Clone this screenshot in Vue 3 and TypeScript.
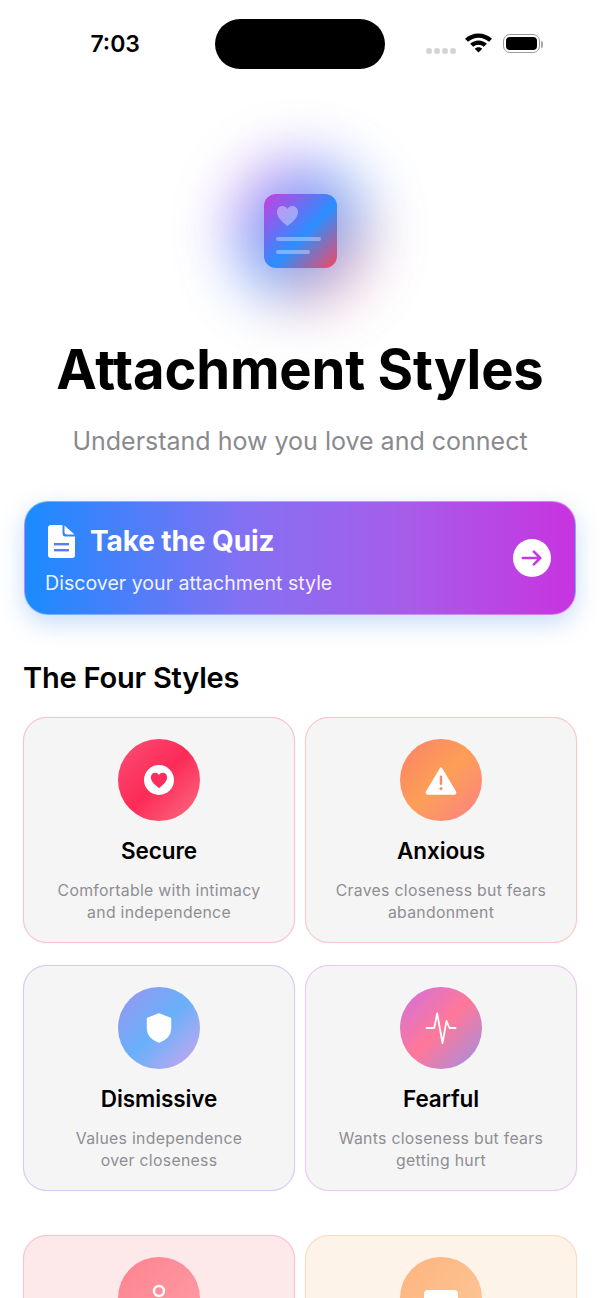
<template>
  <main class="screen">
    <header class="status-bar">
      <span class="clock">7:03</span>
      <div class="island"></div>
      <div class="status-icons">
        <div class="signal"><i v-for="n in 4" :key="n"></i></div>
        <svg class="wifi" width="27" height="20" viewBox="2.200 3 21.600 15.300">
          <path d="M13 3C8.800 3 5 4.600 2.200 7.200L4.600 9.700C6.800 7.700 9.800 6.400 13 6.400s6.200 1.300 8.400 3.300l2.400-2.500C21 4.600 17.200 3 13 3Z" fill="#000" />
          <path d="M13 8.600c-2.600 0-5 1-6.700 2.600l2.500 2.500c1.100-1 2.600-1.700 4.200-1.700s3.100.7 4.200 1.700l2.500-2.500C18 9.600 15.600 8.600 13 8.600Z" fill="#000" />
          <path d="M13 14c-1.200 0-2.300.5-3 1.200l3 3.100 3-3.100c-.7-.7-1.800-1.200-3-1.200Z" fill="#000" />
        </svg>
        <div class="battery"><span></span></div>
      </div>
    </header>

    <section class="hero">
      <div class="app-icon-wrap">
        <div class="glow"></div>
        <div class="app-icon">
          <svg width="23" height="22" viewBox="0 0 24 23">
            <path d="M12 22C4.500 16 1 12 1 7.200 1 3.700 3.600 1 6.800 1 8.900 1 10.900 2.100 12 4 13.100 2.100 15.100 1 17.200 1 20.400 1 23 3.700 23 7.200 23 12 19.500 16 12 22Z" fill="#fff" fill-opacity=".38" />
          </svg>
          <div class="icon-line long"></div>
          <div class="icon-line short"></div>
        </div>
      </div>
      <h1>Attachment Styles</h1>
      <p class="subtitle">Understand how you love and connect</p>
    </section>

    <button class="quiz-card" type="button">
      <div class="quiz-text">
        <div class="quiz-title">
          <svg width="27" height="33" viewBox="0 0 27 33">
            <path d="M3 0h11.500v8.500A3 3 0 0 0 17.500 11.500H27V30a3 3 0 0 1-3 3H3a3 3 0 0 1-3-3V3a3 3 0 0 1 3-3Z" fill="#fff" />
            <path d="M16.500 .5 26.500 9.500h-8a2 2 0 0 1-2-2Z" fill="#fff" />
            <rect x="6" y="18" width="15" height="2.400" fill="#5a7cf5" />
            <rect x="6" y="24" width="15" height="2.400" fill="#5a7cf5" />
          </svg>
          <span>Take the Quiz</span>
        </div>
        <div class="quiz-sub">Discover your attachment style</div>
      </div>
      <div class="quiz-arrow">
        <svg width="22" height="22" viewBox="0 0 24 24" fill="none" stroke="#c23be0" stroke-width="2.800" stroke-linecap="round" stroke-linejoin="round">
          <path d="M2 12h19M14 5l7 7-7 7" />
        </svg>
      </div>
    </button>

    <h2>The Four Styles</h2>

    <section class="style-grid">
      <article v-for="item in styles" :key="item.kind" class="style-card" :class="item.kind">
        <div class="style-icon">
          <template v-if="item.kind === 'secure'">
            <div class="heart-disc">
              <svg width="18" height="17" viewBox="0 0 24 23">
                <path d="M12 22C4.500 16 1 12 1 7.200 1 3.700 3.600 1 6.800 1 8.900 1 10.900 2.100 12 4 13.100 2.100 15.100 1 17.200 1 20.400 1 23 3.700 23 7.200 23 12 19.500 16 12 22Z" fill="#fb2f5d" />
              </svg>
            </div>
          </template>
          <svg v-else-if="item.kind === 'anxious'" width="32" height="29" viewBox="0 0 32 29">
            <path d="M16 2.500 30 26a1 1 0 0 1-.9 1.500H2.900A1 1 0 0 1 2 26Z" fill="#fff" stroke="#fff" stroke-width="2.400" stroke-linejoin="round" />
            <rect x="14.800" y="9.500" width="2.400" height="9.500" rx="1.200" fill="#fb8a60" />
            <circle cx="16" cy="22.500" r="1.500" fill="#fb8a60" />
          </svg>
          <svg v-else-if="item.kind === 'dismissive'" width="26" height="30" viewBox="0 0 26 30">
            <path d="M13 1 24.500 5.500V15c0 7-4.500 11.500-11.500 14C6 26.500 1.500 22 1.500 15V5.500Z" fill="#fff" stroke="#fff" stroke-linejoin="round" stroke-width="1.500" />
          </svg>
          <svg v-else-if="item.kind === 'fearful'" width="32" height="32" viewBox="0 0 32 32" fill="none" stroke="#fff" stroke-width="1.800" stroke-linecap="round" stroke-linejoin="round">
            <path d="M1.500 16H9.200L12.200 1.500 17.500 31 21.500 9 24.500 16H30.500" />
          </svg>
          <svg v-else-if="item.kind === 'person'" width="32" height="32" viewBox="0 0 32 32" fill="none" stroke="#fff" stroke-width="2.400">
            <circle cx="16" cy="8" r="5" />
          </svg>
          <div v-else class="calendar"></div>
        </div>
        <h3>{{ item.name }}</h3>
        <p>{{ item.line1 }}<br />{{ item.line2 }}</p>
      </article>
    </section>
  </main>
</template>

<script setup lang="ts">
type StyleCard = {
  kind: string
  name: string
  line1: string
  line2: string
}

const styles: StyleCard[] = [
  { kind: 'secure', name: 'Secure', line1: 'Comfortable with intimacy', line2: 'and independence' },
  { kind: 'anxious', name: 'Anxious', line1: 'Craves closeness but fears', line2: 'abandonment' },
  { kind: 'dismissive', name: 'Dismissive', line1: 'Values independence', line2: 'over closeness' },
  { kind: 'fearful', name: 'Fearful', line1: 'Wants closeness but fears', line2: 'getting hurt' },
  { kind: 'person', name: '', line1: '', line2: '' },
  { kind: 'calendar', name: '', line1: '', line2: '' },
]
</script>

<style scoped>
.screen {
  width: 600px;
  height: 1298px;
  overflow: hidden;
  background: #fff;
  color: #000;
  font-family: Inter, "Liberation Sans", sans-serif;
}
.status-bar {
  display: grid;
  grid-template-columns: 215px 170px 215px;
  align-items: center;
  height: 50px;
  padding-top: 19px;
}
.clock {
  justify-self: end;
  margin-right: 75px;
  font-size: 23px;
  font-weight: 600;
  line-height: 50px;
}
.island {
  height: 50px;
  background: #000;
  border-radius: 25px;
}
.status-icons {
  display: flex;
  align-items: center;
  padding-left: 41px;
}
.signal {
  display: flex;
  gap: 2px;
  margin-top: 13px;
}
.signal i {
  width: 6px;
  height: 6px;
  border-radius: 50%;
  background: #d4d4d4;
}
.wifi {
  margin-left: 9px;
  margin-top: -2px;
}
.battery {
  position: relative;
  box-sizing: content-box;
  width: 31px;
  height: 13px;
  margin-left: 11px;
  margin-top: -1px;
  padding: 2px;
  border: 1px solid #9a9a9a;
  border-radius: 7px;
}
.battery span {
  display: block;
  width: 100%;
  height: 100%;
  background: #000;
  border-radius: 4px;
}
.battery::after {
  content: "";
  position: absolute;
  right: -4px;
  top: 6px;
  width: 2px;
  height: 7px;
  background: #a8a8a8;
  border-radius: 0 2px 2px 0;
}
.hero {
  display: flex;
  flex-direction: column;
  align-items: center;
  padding-top: 125px;
}
.app-icon-wrap {
  position: relative;
  width: 73px;
  height: 74px;
}
.glow {
  position: absolute;
  left: -31px;
  top: -34px;
  width: 135px;
  height: 142px;
  border-radius: 50%;
  background: linear-gradient(135deg, #c93fe0 10%, #2c8dff 50%, #ff5a6c 90%);
  filter: blur(30px);
  opacity: .7;
}
.app-icon {
  position: relative;
  box-sizing: border-box;
  width: 73px;
  height: 74px;
  padding: 11px 12px;
  border-radius: 12px;
  background: linear-gradient(135deg, #c93fe0 0%, #2b8fff 55%, #f8475f 100%);
}
.app-icon svg {
  display: block;
}
.icon-line {
  height: 4px;
  margin-top: 9px;
  border-radius: 2px;
  background: rgba(255, 255, 255, .35);
}
.icon-line.long {
  width: 45px;
  margin-top: 10px;
}
.icon-line.short {
  width: 34px;
}
h1 {
  margin: 71px 0 0;
  font-size: 54.400px;
  font-weight: 700;
  line-height: 60px;
  letter-spacing: -.2px;
}
.subtitle {
  margin: 26px 0 0;
  font-size: 25px;
  line-height: 32px;
  color: #8a8a8e;
}
.quiz-card {
  display: flex;
  align-items: center;
  justify-content: space-between;
  box-sizing: border-box;
  width: 552px;
  height: 114px;
  margin: 44px 24px 0;
  padding: 0 24px 0 20px;
  border: 1px solid rgba(255, 255, 255, .35);
  border-radius: 24px;
  background: linear-gradient(90deg, #1a8bff 0%, #8470f3 40%, #a85ce8 70%, #c833e0 100%);
  box-shadow: 0 8px 24px rgba(70, 140, 230, .3);
  color: #fff;
  font-family: inherit;
  text-align: left;
}
.quiz-text {
  margin-top: 3px;
}
.quiz-title {
  display: flex;
  align-items: center;
  gap: 15px;
  padding-left: 3px;
  font-size: 28px;
  font-weight: 700;
  line-height: 36px;
  letter-spacing: -.1px;
}
.quiz-sub {
  margin-top: 11px;
  font-size: 19.600px;
  line-height: 26px;
  color: rgba(255, 255, 255, .92);
}
.quiz-arrow {
  display: flex;
  align-items: center;
  justify-content: center;
  width: 38px;
  height: 38px;
  border-radius: 50%;
  background: #fff;
}
h2 {
  margin: 45px 23px 0;
  font-size: 29px;
  font-weight: 600;
  line-height: 36px;
  letter-spacing: -.2px;
}
.style-grid {
  display: grid;
  grid-template-columns: 272px 272px;
  column-gap: 10px;
  row-gap: 22px;
  margin: 21px 23px 0;
}
.style-card {
  --edge: #f9c2ce;
  display: flex;
  flex-direction: column;
  align-items: center;
  box-sizing: border-box;
  height: 226px;
  padding-top: 21px;
  border: 1px solid var(--edge);
  border-radius: 24px;
  background: #f5f5f6;
  box-shadow: 0 0 1px var(--edge);
}
.style-card.anxious { --edge: #f9c8c9; }
.style-card.dismissive { --edge: #d2cdf3; }
.style-card.fearful { --edge: #ecc9f0; }
.style-card.person {
  --edge: #fac3cf;
  margin-top: 22px;
  background: #fde8ea;
}
.style-card.calendar {
  --edge: #fbdcc3;
  margin-top: 22px;
  background: #fdf3e8;
}
.style-icon {
  display: flex;
  align-items: center;
  justify-content: center;
  flex: none;
  width: 82px;
  height: 82px;
  border-radius: 50%;
}
.secure .style-icon { background: linear-gradient(135deg, #fb4f76 0%, #fc2b57 50%, #fc6d83 100%); }
.anxious .style-icon { background: linear-gradient(135deg, #fb8168 0%, #fd9f57 50%, #fc7f86 100%); }
.dismissive .style-icon { background: linear-gradient(135deg, #9a95f0 0%, #68b0fa 50%, #cfa6ec 100%); }
.fearful .style-icon { background: linear-gradient(135deg, #d070e0 0%, #ff7898 50%, #9c90e8 100%); }
.person .style-icon {
  align-items: flex-start;
  padding-top: 26px;
  box-sizing: border-box;
  background: linear-gradient(135deg, #fd8390 0%, #fe9fa6 100%);
}
.calendar .style-icon {
  align-items: flex-start;
  padding-top: 33px;
  box-sizing: border-box;
  background: linear-gradient(135deg, #fdb47e 0%, #fdc89a 100%);
}
.style-icon .calendar {
  width: 34px;
  height: 30px;
  border-radius: 4px;
  background: #fff;
}
.heart-disc {
  display: flex;
  align-items: center;
  justify-content: center;
  width: 30px;
  height: 30px;
  border-radius: 50%;
  background: #fff;
}
h3 {
  margin: 15px 0 0;
  font-size: 22.500px;
  font-weight: 600;
  line-height: 30px;
  letter-spacing: -.1px;
}
.style-card p {
  margin: 14px 0 0;
  font-size: 15.800px;
  line-height: 22px;
  letter-spacing: .3px;
  text-align: center;
  color: #8e8e93;
}
</style>

<style>
html, body {
  margin: 0;
  overflow: hidden;
  background: #fff;
}
</style>
